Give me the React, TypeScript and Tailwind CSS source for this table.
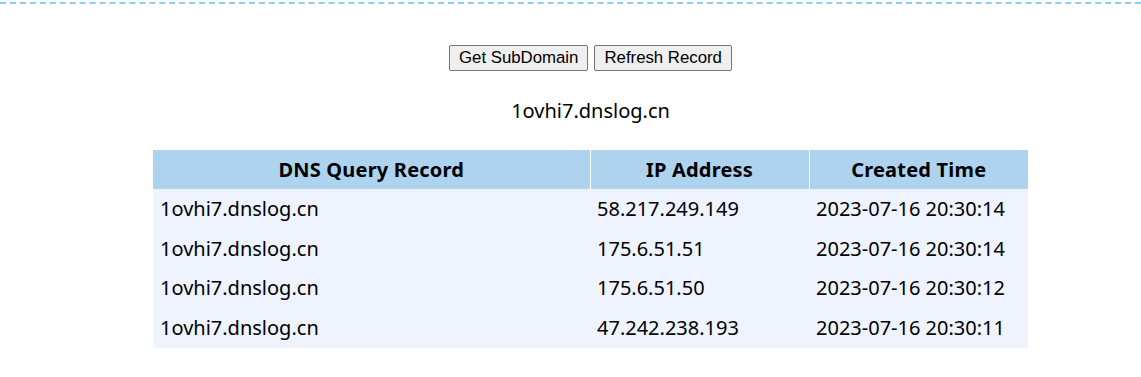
import React from 'react';

const records = [
  { domain: '1ovhi7.dnslog.cn', ip: '58.217.249.149', time: '2023-07-16 20:30:14' },
  { domain: '1ovhi7.dnslog.cn', ip: '175.6.51.51', time: '2023-07-16 20:30:14' },
  { domain: '1ovhi7.dnslog.cn', ip: '175.6.51.50', time: '2023-07-16 20:30:12' },
  { domain: '1ovhi7.dnslog.cn', ip: '47.242.238.193', time: '2023-07-16 20:30:11' },
];

export default function App() {
  return (
    <div className="w-[1141px] h-[377px] bg-white overflow-hidden font-['Noto_Sans',sans-serif] text-black">
      {/* dashed rule at the very top */}
      <div className="pt-[2px]">
        <div className="border-t-2 border-dashed border-[#87cefa]" />
      </div>

      <div className="pl-[40px] flex flex-col items-center">
        <div className="mt-[41px] flex gap-[6px] font-['Liberation_Sans',Arial,sans-serif] text-[16.8px]">
          <button className="h-[26px] px-[9px] bg-[#efefef] border border-[#767676] rounded-[2px] leading-none">
            Get SubDomain
          </button>
          <button className="h-[26px] px-[9px] bg-[#efefef] border border-[#767676] rounded-[2px] leading-none">
            Refresh Record
          </button>
        </div>

        <div className="mt-[25px] text-[20px] leading-[30px]">1ovhi7.dnslog.cn</div>

        <table className="mt-[24px] w-[875px] border-collapse text-[20px]">
          <thead>
            <tr className="bg-[#add3ee] h-[39px]">
              <th className="w-[437px] border-r border-white font-bold tracking-[0.2px]">DNS Query Record</th>
              <th className="w-[219px] border-r border-white font-bold tracking-[0.2px]">IP Address</th>
              <th className="font-bold tracking-[0.2px]">Created Time</th>
            </tr>
          </thead>
          <tbody className="bg-[#eef3fe]">
            {records.map((r, i) => (
              <tr key={i} className="h-[39.75px]">
                <td className="pl-[7px]">{r.domain}</td>
                <td className="pl-[7px]">{r.ip}</td>
                <td className="pl-[7px]">{r.time}</td>
              </tr>
            ))}
          </tbody>
        </table>
      </div>
    </div>
  );
}
